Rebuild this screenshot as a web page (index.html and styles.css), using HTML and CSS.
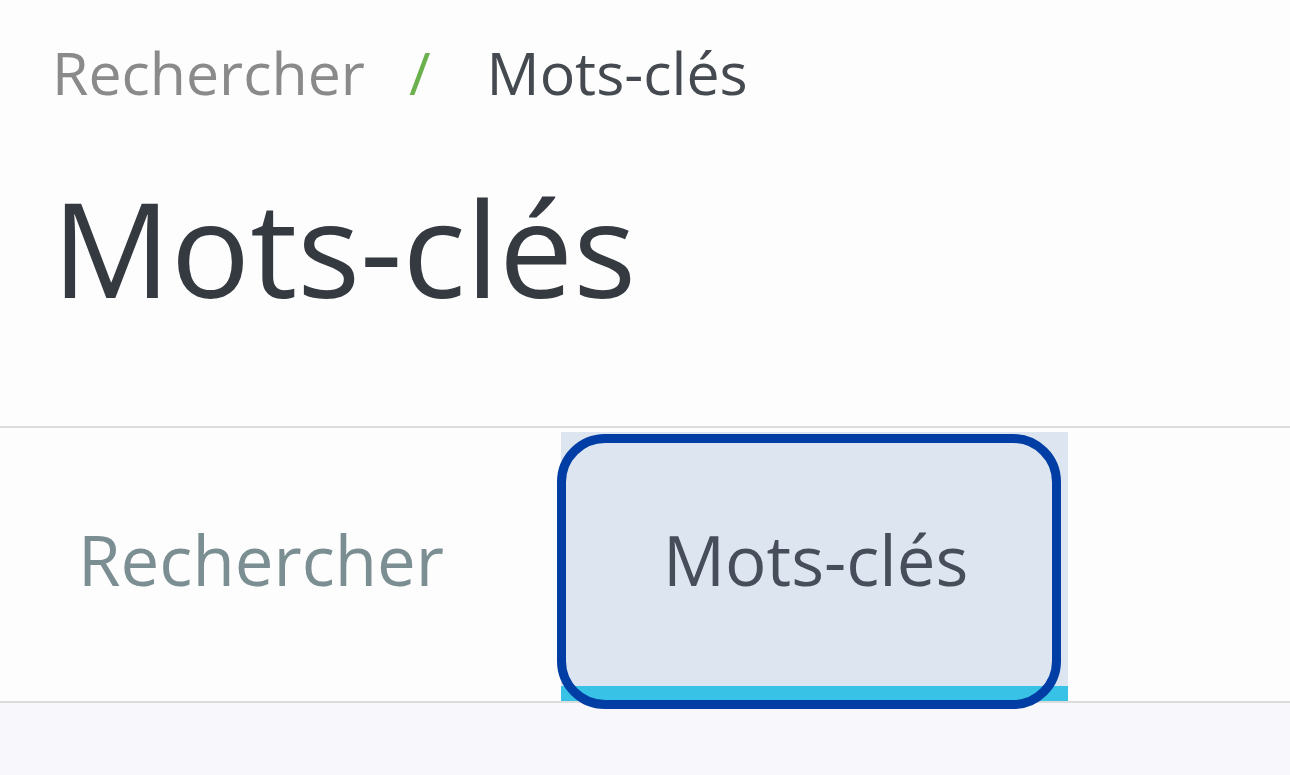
FILE: index.html
```html
<!DOCTYPE html>
<html lang="fr">
<head>
<meta charset="utf-8">
<title>Mots-clés</title>
<link rel="stylesheet" href="styles.css">
</head>
<body>
<div class="page">
  <header class="head">
    <nav class="crumbs">
      <a class="crumb-link" href="#">Rechercher</a>
      <span class="crumb-sep">/</span>
      <span class="crumb-current">Mots-clés</span>
    </nav>
    <h1 class="title">Mots-clés</h1>
  </header>
  <div class="tabbar">
    <a class="tab tab-first" href="#">Rechercher</a>
    <a class="tab tab-active" href="#">Mots-clés</a>
  </div>
  <main class="content"></main>
</div>
</body>
</html>
```
FILE: styles.css
```css
html, body {
  margin: 0;
  padding: 0;
  height: 100%;
}
body {
  font-family: "Open Sans", "Noto Sans", sans-serif;
  background: #fdfdfd;
  overflow: hidden;
}
.page {
  display: flex;
  flex-direction: column;
  height: 100%;
}
.head {
  padding: 35px 0 0 52px;
}
.crumbs {
  display: flex;
  align-items: baseline;
  font-size: 59px;
  line-height: 74px;
}
.crumb-link {
  color: #8a8a8a;
  text-decoration: none;
}
.crumb-sep {
  color: #6ab04c;
  margin: 0 56px 0 44px;
}
.crumb-current {
  color: #454a50;
}
.title {
  margin: 59px 0 0 0;
  font-size: 132px;
  line-height: 158px;
  font-weight: 400;
  color: #343a40;
}
.tabbar {
  margin-top: 100px;
  display: flex;
  align-items: stretch;
  border-top: 2px solid #dcdcdc;
  border-bottom: 2px solid #dcdcdc;
  height: 273px;
  box-sizing: content-box;
  background: #fdfdfd;
}
.tab {
  display: flex;
  align-items: center;
  margin-top: 4px;
  box-sizing: border-box;
  height: 269px;
  font-size: 69px;
  text-decoration: none;
  border-bottom: 15px solid transparent;
}
.tab-first {
  color: #7b8f93;
  padding: 0 117px 0 78px;
}
.tab-active {
  position: relative;
  color: #474d5a;
  background: #dde6f0;
  border-bottom-color: #38c3e6;
  padding: 0 100px 0 102px;
}
.tab-active::after {
  content: "";
  position: absolute;
  left: -4px;
  right: 7px;
  top: 2px;
  bottom: -23px;
  border: 9px solid #003da5;
  border-radius: 48px;
}
.content {
  flex: 1;
  background: #f8f8fc;
}
```
